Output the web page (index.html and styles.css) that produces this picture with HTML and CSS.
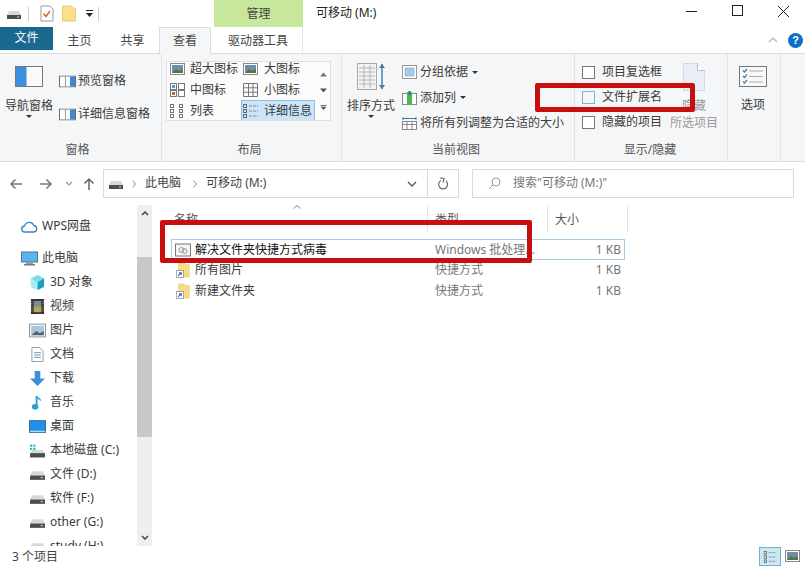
FILE: index.html
```html
<!DOCTYPE html>
<html lang="zh-CN">
<head>
<meta charset="utf-8">
<title>可移动 (M:)</title>
<link rel="stylesheet" href="styles.css">
</head>
<body>
<svg class="defs" width="0" height="0">
  <defs>
    <symbol id="drive" viewBox="0 0 16 12"><path d="M3 3h10l2 4v4H1V7z" fill="#d8d8d8"/><rect x="1" y="7" width="14" height="4" fill="#4d4d4d"/><rect x="11" y="8.5" width="2" height="1" fill="#ddd"/></symbol>
    <symbol id="shortcut" viewBox="0 0 16 18"><path d="M3 1h6l2 2h4v14H3z" fill="#f6dc84" stroke="#e4c25f" stroke-width=".6"/><rect x="0.5" y="9.5" width="8" height="8" fill="#fff" stroke="#9a9a9a"/><path d="M2.5 15.5l3-3M3.5 12h2.5v2.5" stroke="#1c62b8" stroke-width="1.2" fill="none"/></symbol>
    <symbol id="pane" viewBox="0 0 17 12"><rect x=".5" y=".5" width="16" height="11" fill="#fff" stroke="#6d6d6d"/><rect x="6" y="1" width="1" height="10" fill="#9a9a9a"/><rect x="11" y="1" width="5" height="10" fill="#3a8ad8"/></symbol>
    <symbol id="thumb" viewBox="0 0 15 12"><rect x=".5" y=".5" width="14" height="11" fill="#fff" stroke="#888"/><rect x="2" y="2" width="11" height="8" fill="#6f8fa8"/><path d="M2 10l4-4 3 2 4-2v4z" fill="#5d7240"/></symbol>
    <symbol id="grid4" viewBox="0 0 15 14"><g fill="#fff" stroke="#777"><rect x=".5" y=".5" width="6" height="6"/><rect x="8.5" y=".5" width="6" height="6"/><rect x=".5" y="7.5" width="6" height="6"/><rect x="8.5" y="7.5" width="6" height="6"/></g><rect x="2" y="2" width="3" height="3" fill="#5b94c8"/><rect x="2" y="9" width="3" height="3" fill="#c06a3c"/></symbol>
    <symbol id="grid9" viewBox="0 0 15 14"><g fill="none" stroke="#777"><path d="M.5.5h14v13H.5zM5.5.5v13M10 .5v13M.5 4.8h14M.5 9.2h14"/></g></symbol>
    <symbol id="list" viewBox="0 0 15 14"><g fill="none" stroke="#777"><rect x=".5" y=".5" width="3" height="3"/><rect x=".5" y="5.5" width="3" height="3"/><rect x=".5" y="10.5" width="3" height="3"/><rect x="9.5" y=".5" width="3" height="3"/><rect x="9.5" y="5.5" width="3" height="3"/><rect x="9.5" y="10.5" width="3" height="3"/></g></symbol>
    <symbol id="details" viewBox="0 0 15 14"><g fill="none" stroke="#666"><rect x=".5" y=".5" width="3" height="3"/><rect x=".5" y="5.5" width="3" height="3"/><rect x=".5" y="10.5" width="3" height="3"/></g><path d="M6 2h9M6 7h9M6 12h9" stroke="#888" stroke-dasharray="3 1"/></symbol>
  </defs>
</svg>
<div class="window">

  <header class="titlebar">
    <div class="qat">
      <svg class="i16x12" viewBox="0 0 16 12"><use href="#drive"/></svg>
      <span class="qat-sep"></span>
      <svg class="qat-icon" viewBox="0 0 14 16"><path d="M1 .5h9l3 3v12H1z" fill="#fff" stroke="#999"/><path d="M3.5 8l2.5 3 4-5.500" fill="none" stroke="#d9622b" stroke-width="1.400"/></svg>
      <svg class="qat-icon" viewBox="0 0 14 16"><path d="M.5.5h8l5 3v12H.5z" fill="#f9df8e" stroke="#ecc869"/></svg>
      <svg class="qat-caret" viewBox="0 0 7 7"><rect y="0" width="7" height="1" fill="#222"/><path d="M0 3h7L3.500 7z" fill="#222"/></svg>
      <span class="qat-sep"></span>
    </div>
    <div class="manage">管理</div>
    <div class="title">可移动 (M:)</div>
    <div class="controls">
      <svg class="ctl" viewBox="0 0 46 14"><path d="M18 7.500h11" stroke="#222"/></svg>
      <svg class="ctl" viewBox="0 0 46 14"><rect x="18.500" y="1.500" width="10" height="10" fill="none" stroke="#222"/></svg>
      <svg class="ctl" viewBox="0 0 46 14"><path d="M18 2l11 11M29 2L18 13" stroke="#222"/></svg>
    </div>
  </header>

  <nav class="tabs">
    <div class="tab tab-file">文件</div>
    <div class="tab tab-home">主页</div>
    <div class="tab tab-share">共享</div>
    <div class="tab tab-view">查看</div>
    <div class="tab tab-drive">驱动器工具</div>
    <div class="tabs-end">
      <svg class="chev" viewBox="0 0 10 6"><path d="M1 5l4-4 4 4" fill="none" stroke="#b5b5b5" stroke-width="1.200"/></svg>
      <span class="help">?</span>
    </div>
  </nav>

  <section class="ribbon">
    <div class="group g-pane">
      <div class="group-body">
        <div class="big big-nav">
          <svg class="big-icon" viewBox="0 0 28 21"><rect x=".5" y=".5" width="27" height="20" fill="#fafafa" stroke="#777"/><rect x="1" y="1" width="10.500" height="19" fill="#3d8ede"/></svg>
          <span>导航窗格</span>
          <i class="caret"></i>
        </div>
        <div class="col pane-col">
          <div class="small"><svg class="i17" viewBox="0 0 17 12"><use href="#pane"/></svg>预览窗格</div>
          <div class="small"><svg class="i17" viewBox="0 0 17 12"><use href="#pane"/></svg>详细信息窗格</div>
        </div>
      </div>
      <div class="group-label">窗格</div>
    </div>

    <div class="group g-layout">
      <div class="group-body">
        <div class="gallery">
          <div class="gallery-items">
            <div class="g-item"><svg class="i15" viewBox="0 0 15 12"><use href="#thumb"/></svg>超大图标</div>
            <div class="g-item"><svg class="i15" viewBox="0 0 15 12"><use href="#thumb"/></svg>大图标</div>
            <div class="g-item"><svg class="i15" viewBox="0 0 15 14"><use href="#grid4"/></svg>中图标</div>
            <div class="g-item"><svg class="i15" viewBox="0 0 15 14"><use href="#grid9"/></svg>小图标</div>
            <div class="g-item"><svg class="i15" viewBox="0 0 15 14"><use href="#list"/></svg>列表</div>
            <div class="g-item g-selected"><svg class="i15" viewBox="0 0 15 14"><use href="#details"/></svg>详细信息</div>
          </div>
          <div class="gallery-scroll">
            <svg viewBox="0 0 7 4"><path d="M0 4l3.500-4L7 4z" fill="#777"/></svg>
            <svg viewBox="0 0 7 4"><path d="M0 0l3.500 4L7 0z" fill="#555"/></svg>
            <svg viewBox="0 0 7 6"><rect width="7" height="1" fill="#555"/><path d="M0 2l3.500 4L7 2z" fill="#555"/></svg>
          </div>
        </div>
      </div>
      <div class="group-label">布局</div>
    </div>

    <div class="group g-view">
      <div class="group-body">
        <div class="big big-sort">
          <svg class="sort-icon" viewBox="0 0 28 27"><rect x=".5" y=".5" width="19" height="26" fill="#f3f3f3" stroke="#aaa"/><path d="M2 5h16M2 9h16M2 13h16M2 17h16M2 21h16M7 2v23M13 2v23" stroke="#b5b5b5"/><path d="M25 1v25" stroke="#3a7cab" stroke-width="1.400"/><path d="M22 5l3-4 3 4zM22 22l3 4 3-4z" fill="#3a7cab"/></svg>
          <span>排序方式</span>
          <i class="caret"></i>
        </div>
        <div class="col view-col">
          <div class="small"><svg class="i15" viewBox="0 0 15 14"><rect x=".5" y=".5" width="14" height="13" fill="#fff" stroke="#999"/><rect x="3" y="3" width="9" height="8" fill="#a5cbec" stroke="#7ba7cc" stroke-width=".6"/></svg>分组依据<i class="caret caret-inline"></i></div>
          <div class="small"><svg class="i15" viewBox="0 0 15 14"><rect x=".5" y="2.500" width="14" height="11" fill="#fff" stroke="#888"/><rect x="5" y="1" width="5" height="13" fill="#4ab84a"/><path d="M7.500 0v4" stroke="#2b6ea6" stroke-width="2"/></svg>添加列<i class="caret caret-inline"></i></div>
          <div class="small"><svg class="i15" viewBox="0 0 15 14"><path d="M1 2.500h13M1 1v3M14 1v3" stroke="#2f7db5"/><rect x=".5" y="5.500" width="14" height="8" fill="#fff" stroke="#888"/><path d="M5 6v8M10 6v8M1 8.500h13" stroke="#888"/></svg>将所有列调整为合适的大小</div>
        </div>
      </div>
      <div class="group-label">当前视图</div>
    </div>

    <div class="group g-show">
      <div class="group-body">
        <div class="col check-col">
          <label class="check"><span class="box"></span>项目复选框</label>
          <label class="check"><span class="box box-hover"></span>文件扩展名</label>
          <label class="check"><span class="box"></span>隐藏的项目</label>
        </div>
        <div class="big big-hide">
          <svg class="hide-icon" viewBox="0 0 22 28"><path d="M.5.500h14l7 7v20H.5z" fill="#e7eef8" stroke="#c4cfdf" stroke-dasharray="2 1"/><path d="M14.500.500v7h7" fill="#fff" stroke="#bbb"/></svg>
          <span class="muted">隐藏</span>
          <span class="muted hide-sub">所选项目</span>
        </div>
      </div>
      <div class="group-label">显示/隐藏</div>
    </div>

    <div class="group g-options">
      <div class="group-body">
        <div class="big big-options">
          <svg class="big-icon" viewBox="0 0 28 21"><rect x=".5" y=".5" width="27" height="20" fill="#f8f8f8" stroke="#777"/><path d="M10 5h14M10 10.500h14M10 16h14" stroke="#aaa"/><path d="M4 4.500l1.500 1.500L8 3M4 10l1.500 1.500L8 8.500M4 15.500L5.500 17 8 14" fill="none" stroke="#3e7fb5" stroke-width="1.200"/></svg>
          <span>选项</span>
        </div>
      </div>
      <div class="group-label"></div>
    </div>
  </section>

  <div class="addressbar">
    <div class="nav-btns">
      <svg class="nav-arrow" viewBox="0 0 14 12"><path d="M13 6H2M6.500 1.500L2 6l4.500 4.500" fill="none" stroke="#777" stroke-width="1.500"/></svg>
      <svg class="nav-arrow" viewBox="0 0 14 12"><path d="M1 6h11M7.500 1.500L12 6l-4.500 4.500" fill="none" stroke="#777" stroke-width="1.500"/></svg>
      <svg class="nav-down" viewBox="0 0 8 5"><path d="M1 1l3 3 3-3" fill="none" stroke="#999" stroke-width="1.200"/></svg>
      <svg class="nav-arrow nav-up" viewBox="0 0 12 14"><path d="M6 13V2M1.500 6.500L6 2l4.500 4.500" fill="none" stroke="#666" stroke-width="1.500"/></svg>
    </div>
    <div class="address">
      <svg class="i16x12" viewBox="0 0 16 12"><use href="#drive"/></svg>
      <svg class="crumb" viewBox="0 0 4 8"><path d="M.5 .5L3.500 4 .5 7.500" fill="none" stroke="#888"/></svg>
      <span class="addr-text">此电脑</span>
      <svg class="crumb crumb-next" viewBox="0 0 4 8"><path d="M.5 .5L3.500 4 .5 7.500" fill="none" stroke="#888"/></svg>
      <span class="addr-text">可移动 (M:)</span>
      <span class="flex"></span>
      <svg class="addr-down" viewBox="0 0 10 6"><path d="M1 1l4 4 4-4" fill="none" stroke="#555" stroke-width="1.300"/></svg>
      <span class="refresh">
        <svg viewBox="0 0 12 14"><path d="M4 3.500a4.500 4.500 0 1 0 5 .5M3 1l4 .5-1 4" fill="none" stroke="#666" stroke-width="1.200"/></svg>
      </span>
    </div>
    <div class="search">
      <svg class="search-icon" viewBox="0 0 13 13"><circle cx="8" cy="5" r="4" fill="none" stroke="#999"/><path d="M5 8l-4 4" stroke="#999"/></svg>
      <span class="addr-text">搜索"可移动 (M:)"</span>
    </div>
  </div>

  <main class="main">
    <aside class="navpane">
      <ul class="tree">
        <li class="node top"><svg class="i17" viewBox="0 0 17 13"><path d="M4 12a3 3 0 0 1-.5-6A5 5 0 0 1 13 5.500 3.300 3.300 0 0 1 13 12z" fill="#fff" stroke="#3d7fc4" stroke-width="1.300"/></svg>WPS网盘</li>
        <li class="node top pc"><svg class="i17" viewBox="0 0 17 14"><rect x=".5" y=".5" width="16" height="10" fill="#58b5ee" stroke="#5a6f80"/><rect x="5" y="11" width="7" height="1.500" fill="#8a9aa8"/><rect x="3" y="12.500" width="11" height="1.500" fill="#6a7a88"/></svg>此电脑</li>
        <li class="node"><svg class="i17" viewBox="0 0 16 16"><path d="M8 0l7 3.500v9L8 16l-7-3.500v-9z" fill="#7adde8"/><path d="M8 8l7-4.500v9L8 16z" fill="#1d9fc4"/><path d="M1 3.500L8 8v8l-7-3.500z" fill="#a9ecef"/></svg>3D 对象</li>
        <li class="node"><svg class="i17" viewBox="0 0 14 16"><rect width="14" height="16" fill="#333"/><rect x="3" y="2" width="8" height="12" fill="#7c8a8f"/><rect x="3" y="8" width="8" height="6" fill="#b7a35a"/><path d="M1 2v12M13 2v12" stroke="#ccc" stroke-dasharray="1 1.500"/></svg>视频</li>
        <li class="node"><svg class="i17" viewBox="0 0 16 13"><rect x=".5" y=".5" width="15" height="12" fill="#fff" stroke="#8b9aa5"/><rect x="2" y="2" width="12" height="9" fill="#a9c8dc"/><path d="M2 11l5-4 3 2 4-2v4z" fill="#4f6773"/></svg>图片</li>
        <li class="node"><svg class="i17" viewBox="0 0 13 16"><path d="M.5.500h8l4 4v11H.5z" fill="#fff" stroke="#8b9aa5"/><path d="M3 6h7M3 8.500h7M3 11h7" stroke="#5d90bd"/></svg>文档</li>
        <li class="node"><svg class="i17" viewBox="0 0 16 16"><path d="M5 0h6v8h5l-8 8-8-8h5z" fill="#3b8fdc"/></svg>下载</li>
        <li class="node"><svg class="i17" viewBox="0 0 14 16"><path d="M6 1v11" stroke="#2e9ad8" stroke-width="2"/><path d="M6 0c1 3 5 3 5 7-1-2-3-2-4-3z" fill="#2e9ad8"/><ellipse cx="4.500" cy="12.500" rx="3.500" ry="3" fill="#2e9ad8"/></svg>音乐</li>
        <li class="node"><svg class="i17" viewBox="0 0 16 12"><rect x=".5" y=".5" width="15" height="11" fill="#1e90ee" stroke="#4a6d8c"/><rect x="1" y="10" width="14" height="1" fill="#d5e6f3"/></svg>桌面</li>
        <li class="node"><svg class="i17" viewBox="0 0 16 13"><path d="M3 6h10l2 3v4H1V9z" fill="#d8d8d8"/><rect x="1" y="9" width="14" height="4" fill="#4d4d4d"/><rect x="1" y="1" width="2" height="2" fill="#2eb3d4"/><rect x="4" y="1" width="2" height="2" fill="#2eb3d4"/><rect x="1" y="4" width="2" height="2" fill="#2eb3d4"/><rect x="4" y="4" width="2" height="2" fill="#2eb3d4"/></svg>本地磁盘 (C:)</li>
        <li class="node"><svg class="i17" viewBox="0 0 16 12"><use href="#drive"/></svg>文件 (D:)</li>
        <li class="node"><svg class="i17" viewBox="0 0 16 12"><use href="#drive"/></svg>软件 (F:)</li>
        <li class="node"><svg class="i17" viewBox="0 0 16 12"><use href="#drive"/></svg>other (G:)</li>
        <li class="node"><svg class="i17" viewBox="0 0 16 12"><use href="#drive"/></svg>study (H:)</li>
      </ul>
      <div class="scrollbar">
        <svg class="sb-arrow" viewBox="0 0 8 5"><path d="M1 4l3-3 3 3" fill="none" stroke="#444" stroke-width="1.500"/></svg>
        <div class="sb-thumb"></div>
        <span class="flex"></span>
        <svg class="sb-arrow" viewBox="0 0 8 5"><path d="M1 1l3 3 3-3" fill="none" stroke="#444" stroke-width="1.500"/></svg>
      </div>
    </aside>

    <div class="files">
      <div class="file-head">
        <div class="col-name">名称</div>
        <div class="col-type">类型</div>
        <div class="col-size">大小</div>
        <svg class="sort-mark" viewBox="0 0 8 4"><path d="M.5 3.500L4 .5l3.500 3" fill="none" stroke="#888"/></svg>
      </div>
      <div class="row row-selected">
        <svg class="file-icon" viewBox="0 0 16 13"><rect x=".5" y=".5" width="15" height="12" fill="#f4f4f4" stroke="#777"/><circle cx="6.500" cy="6.500" r="2.500" fill="none" stroke="#999"/><circle cx="9.500" cy="7.500" r="2.500" fill="none" stroke="#999"/></svg>
        <span class="cell-name dark">解决文件夹快捷方式病毒</span>
        <span class="cell-type">Windows 批处理...</span>
        <span class="cell-size">1 KB</span>
      </div>
      <div class="row">
        <svg class="file-icon" viewBox="0 0 16 18"><use href="#shortcut"/></svg>
        <span class="cell-name">所有图片</span>
        <span class="cell-type">快捷方式</span>
        <span class="cell-size">1 KB</span>
      </div>
      <div class="row">
        <svg class="file-icon" viewBox="0 0 16 18"><use href="#shortcut"/></svg>
        <span class="cell-name">新建文件夹</span>
        <span class="cell-type">快捷方式</span>
        <span class="cell-size">1 KB</span>
      </div>
    </div>
  </main>

  <footer class="statusbar">
    <span class="status-text">3 个项目</span>
    <span class="flex"></span>
    <span class="view-btn view-on"><svg viewBox="0 0 15 14"><use href="#details"/></svg></span>
    <span class="view-btn"><svg viewBox="0 0 15 12"><use href="#thumb"/></svg></span>
  </footer>

  <div class="mark mark-ext"></div>
  <div class="mark mark-file"></div>
</div>
</body>
</html>
```
FILE: styles.css
```css
* { box-sizing: border-box; }
html, body { margin: 0; padding: 0; }
body {
  width: 805px;
  height: 566px;
  overflow: hidden;
  background: #fff;
  color: #3a3a3a;
  font: 12px/16px "Noto Sans", "Noto Sans CJK SC", sans-serif;
}
svg { display: block; flex: none; }
ul { list-style: none; margin: 0; padding: 0; }
.defs { position: absolute; }
.flex { flex: 1; }
.window { position: relative; width: 805px; height: 566px; display: flex; flex-direction: column; overflow: hidden; }

/* title bar */
.titlebar { height: 27px; display: flex; flex: none; }
.qat { width: 214px; display: flex; align-items: center; padding-left: 6px; }
.i16x12 { width: 16px; height: 12px; }
.qat-sep { width: 1px; height: 14px; background: #ccc; margin: 0 11px 0 6px; }
.qat-icon { width: 14px; height: 17px; margin-right: 8px; }
.qat-icon + .qat-icon { margin-right: 10px; }
.qat-caret { width: 7px; height: 7px; }
.qat-caret + .qat-sep { margin-left: 5px; }
.manage { width: 89px; background: #c7e79d; text-align: center; line-height: 27px; color: #444; }
.title { padding: 5px 0 0 13px; color: #222; flex: 1; }
.controls { display: flex; padding: 4px 0 0 0; margin-right: -1px; }
.ctl { width: 46px; height: 14px; }

/* tabs */
.tabs { height: 27px; display: flex; flex: none; background: #fff; border-bottom: 1px solid #dcdcdc; position: relative; z-index: 1; }
.tab { height: 26px; line-height: 27px; text-align: center; color: #444; }
.tab-file { width: 53px; background: #19698f; color: #fff; height: 23px; line-height: 22px; }
.tab-home { width: 53px; }
.tab-share { width: 53px; }
.tab-view { width: 52px; height: 27px; background: #f5f6f7; border: 1px solid #dcdcdc; border-bottom: 0; margin-right: 3px; line-height: 25px; }
.tab-drive { width: 89px; border-right: 1px solid #e6e6e6; }
.tabs-end { flex: 1; display: flex; justify-content: flex-end; align-items: center; gap: 10px; padding: 0 2px 0 0; }
.chev { width: 10px; height: 6px; }
.help { width: 15px; height: 15px; border-radius: 50%; background: #0c6fc6; color: #fff; font: bold 11px/15px "Liberation Sans", sans-serif; text-align: center; }

/* ribbon */
.ribbon { height: 108px; flex: none; display: flex; background: #f5f6f7; border-bottom: 1px solid #dcdcdc; }
.group { display: flex; flex-direction: column; border-right: 1px solid #e2e3e4; }
.group-body { height: 88px; display: flex; flex: none; }
.group-label { text-align: center; color: #555; line-height: 16px; }
.g-pane { width: 162px; }
.g-pane .group-label { padding-right: 6px; }
.g-layout { width: 180px; }
.g-layout .group-label { padding-right: 4px; }
.g-view { width: 233px; }
.g-view .group-label { padding-right: 4px; }
.g-show { width: 153px; }
.g-show .group-label { padding-right: 2px; }
.g-options { width: 53px; }
.col { display: flex; flex-direction: column; }
.big { display: flex; flex-direction: column; align-items: center; white-space: nowrap; }
.big-icon { width: 28px; height: 21px; margin-bottom: 11px; }
.caret { display: block; width: 0; height: 0; border: 3px solid transparent; border-top: 3px solid #333; border-bottom: 0; margin-top: 1px; }
.caret-inline { margin: 0 0 0 1px; }
.small { display: flex; align-items: center; white-space: nowrap; }
.i17 { width: 17px; height: 15px; }
.i15 { width: 15px; height: 14px; }

.big-nav { width: 48px; margin-left: 5px; padding-top: 12px; }
.pane-col { margin-left: 6px; padding-top: 19px; gap: 17px; }
.pane-col .small { gap: 2px; }

.gallery { width: 165px; height: 60px; margin: 7px 0 0 4px; display: flex; background: #fbfbfc; border: 1px solid #e0e1e2; overflow: hidden; }
.gallery-items { width: 149px; margin-top: -4px; display: grid; grid-template-columns: 71px 74px; grid-auto-rows: 21px; padding: 0 0 0 3px; }
.g-item { display: flex; align-items: center; gap: 5px; white-space: nowrap; }
.g-item:nth-child(even) { padding-left: 2px; gap: 6px; }
.g-item.g-selected { background: #cce4f7; border: 1px solid #8fbfdf; padding-left: 1px; }
.gallery-scroll { flex: 1; display: flex; flex-direction: column; align-items: center; justify-content: space-around; padding: 4px 0; }
.gallery-scroll svg { width: 7px; height: 5px; }

.big-sort { width: 48px; margin-left: 5px; padding-top: 9px; }
.sort-icon { width: 28px; height: 27px; margin-bottom: 8px; }
.view-col { margin-left: 7px; padding-top: 10px; gap: 9.5px; }
.view-col .small { gap: 3px; height: 16px; }

.check-col { margin-left: 7px; width: 88px; padding-top: 10px; gap: 9px; }
.check { display: flex; align-items: center; gap: 7px; height: 16px; white-space: nowrap; }
.box { width: 13px; height: 13px; background: #fff; border: 1px solid #777; }
.box-hover { background: #f0f8fc; border-color: #7eb4cf; }
.big-hide { width: 48px; margin-left: 0; padding-top: 9px; color: #9a9a9a; }
.hide-icon { width: 22px; height: 28px; margin-bottom: 7px; }
.hide-sub { margin-top: 1px; }

.big-options { width: 50px; padding-top: 12px; }
.big-options .big-icon { margin-bottom: 10px; }

/* address */
.addressbar { height: 43px; flex: none; display: flex; align-items: flex-start; padding-top: 7px; }
.nav-btns { width: 103px; height: 29px; display: flex; align-items: center; padding-left: 9px; }
.nav-arrow { width: 14px; height: 12px; margin-right: 16px; }
.nav-down { width: 8px; height: 5px; margin: 0 10px 0 -4px; }
.nav-arrow.nav-up { width: 12px; height: 14px; }
.address { width: 356px; height: 29px; display: flex; align-items: center; border: 1px solid #dadada; padding-left: 4px; color: #444; }
.addr-text { margin-top: -2px; }
.crumb { width: 4px; height: 8px; margin: 0 9px 0 8px; }
.crumb-next { margin-left: 12px; }
.addr-down { width: 10px; height: 6px; margin-right: 10px; }
.refresh { width: 31px; height: 27px; border-left: 1px solid #dadada; display: flex; align-items: center; justify-content: center; }
.refresh svg { width: 12px; height: 14px; }
.search { width: 322px; height: 29px; margin-left: 13px; display: flex; align-items: center; gap: 12px; padding-left: 15px; border: 1px solid #dadada; color: #777; }
.search-icon { width: 13px; height: 13px; }

/* main */
.main { flex: 1; min-height: 0; display: flex; }
.navpane { width: 152px; display: flex; flex: none; overflow: hidden; }
.tree { width: 137px; padding-top: 9px; flex: none; }
.node { height: 24px; display: flex; align-items: center; gap: 4px; padding-left: 29px; white-space: nowrap; }
.node.top { padding-left: 21px; }
.node.pc { margin-top: 8px; }
.scrollbar { width: 15px; height: 341px; background: #efefef; display: flex; flex-direction: column; align-items: center; padding-top: 6px; }
.sb-arrow { width: 8px; height: 5px; }
.sb-thumb { width: 15px; height: 180px; background: #c8c8c8; margin-top: 41px; }
.scrollbar .sb-arrow:last-child { margin-bottom: 6px; }

.files { flex: 1; min-width: 0; padding-left: 19px; }
.file-head { position: relative; height: 28px; display: flex; width: 457px; margin-bottom: 6px; }
.file-head > div { padding: 7px 0 0 7px; border-right: 1px solid #e5e5e5; height: 27px; color: #555; }
.file-head > .col-name { width: 257px; padding-left: 3px; }
.file-head > .col-type { width: 120px; }
.file-head > .col-size { width: 80px; }
.sort-mark { position: absolute; left: 122px; top: 0; width: 8px; height: 4px; }
.row { width: 454px; height: 21px; display: flex; align-items: center; color: #777; border: 1px solid transparent; white-space: nowrap; padding-left: 3px; }
.row-selected { border-color: #a9cde0; margin-bottom: -1px; }
.file-icon { width: 16px; height: 16px; margin-right: 4px; }
.cell-name { width: 240px; color: #3a3a3a; }
.cell-name.dark { color: #111; }
.cell-type { width: 144px; overflow: hidden; }
.cell-size { width: 42px; text-align: right; }

/* status */
.statusbar { height: 20px; flex: none; display: flex; align-items: flex-end; padding: 0 5px 0 12px; gap: 4px; color: #444; }
.status-text { margin-bottom: 1px; }
.view-btn { width: 15px; height: 14px; display: block; margin-bottom: 3px; }
.view-btn svg { width: 15px; height: 14px; }
.view-btn.view-on { width: 22px; height: 19px; margin-bottom: 0; padding: 3px; background: #cce8f5; border: 1px solid #6fb3cf; }
.view-on svg { width: 14px; height: 12px; }

/* red annotations over the screenshot */
.mark { position: absolute; border: 5px solid #c70f0f; border-radius: 2px; z-index: 5; }
.mark-ext { left: 535px; top: 83px; width: 160px; height: 29px; }
.mark-file { left: 160px; top: 220px; width: 372px; height: 43px; }
```
